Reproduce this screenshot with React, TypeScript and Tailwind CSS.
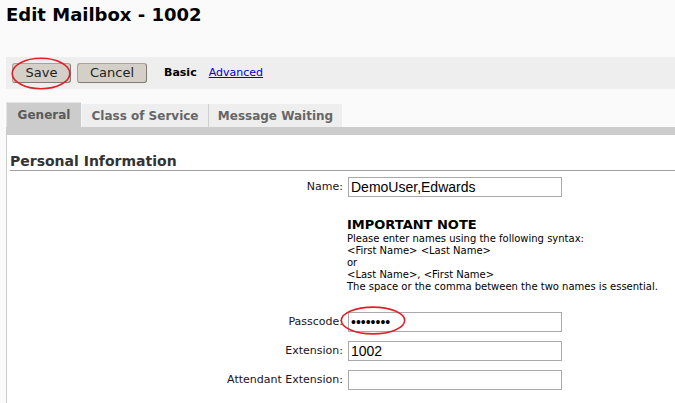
import React from "react";

const VERDANA = "font-['DejaVu_Sans','Verdana',sans-serif]";
const ARIAL = "font-['Liberation_Sans','Arial',sans-serif]";

function Field({ label, value, type = "text" }: { label: string; value: string; type?: string }) {
  return (
    <div className="flex items-center">
      <label className="w-[340px] pr-[4px] text-right text-[11px] text-[#221122]">{label}</label>
      <input
        type={type}
        defaultValue={value}
        readOnly
        className={`ml-[1px] h-[20px] w-[214px] border border-[#a9a9a9] bg-white px-[2px] text-[14px] text-black outline-none ${ARIAL}`}
      />
    </div>
  );
}

function Ellipse({ className }: { className: string }) {
  return (
    <svg className={`pointer-events-none absolute ${className}`} viewBox="0 0 100 100" preserveAspectRatio="none">
      <ellipse cx="50" cy="50" rx="48" ry="46" fill="none" stroke="#e0202a" strokeWidth="1.6" vectorEffect="non-scaling-stroke" />
    </svg>
  );
}

export default function App() {
  return (
    <div className={`relative flex h-[403px] w-[675px] flex-col overflow-hidden bg-[#fafafa] ${VERDANA}`}>
      <h1 className="h-[57px] pl-[6px] pt-[3px] text-[18px] font-bold leading-[24px] text-black">Edit Mailbox - 1002</h1>

      {/* toolbar */}
      <div className="ml-[6px] flex h-[32px] items-center bg-[#eeeeee] pl-[6px]">
        <button className="h-[20px] w-[59px] rounded-[3px] border border-[#a8a49c] border-b-[#7f7b74] border-r-[#7f7b74] bg-[#d4d0c8] text-[13px] leading-[18px] text-[#222]">
          Save
        </button>
        <button className="ml-[6px] h-[20px] w-[70px] rounded-[3px] border border-[#a8a49c] border-b-[#7f7b74] border-r-[#7f7b74] bg-[#d4d0c8] text-[13px] leading-[18px] text-[#222]">
          Cancel
        </button>
        <span className="ml-[17px] text-[11px] font-bold text-black">Basic</span>
        <a className="ml-[12px] text-[11px] text-[#0000cc] underline">Advanced</a>
      </div>

      {/* tabs */}
      <div className="ml-[6px] mt-[13px] flex h-[25px] items-end">
        <div className="flex h-[25px] w-[75px] items-center justify-center border-l border-t border-[#e4e4e4] bg-[#cccccc] text-[12px] font-bold text-[#5a5a5a]">
          General
        </div>
        <div className="flex h-[23px] w-[127px] items-center justify-center border-l border-[#f6f6f6] bg-[#eeeeee] text-[12px] font-bold text-[#666]">
          Class of Service
        </div>
        <div className="flex h-[23px] w-[134px] items-center justify-center border-l border-[#cfcfcf] bg-[#eeeeee] text-[12px] font-bold text-[#666]">
          Message Waiting
        </div>
      </div>
      <div className="ml-[6px] h-[8px] bg-[#cccccc]" />

      {/* content */}
      <div className="ml-[6px] flex-1 border-l border-[#cccccc] bg-white pl-[3px]">
        <div className="mt-[16px] h-[20px] border-b border-[#a0a0a0] text-[14px] font-bold leading-[20px] text-[#333]">
          Personal Information
        </div>
        <div className="-ml-[3px] mt-[6px] flex flex-col">
          <Field label="Name:" value="DemoUser,Edwards" />
          <div className="ml-[340px] mt-[20px] text-black">
            <div className="text-[13px] font-bold leading-[16px]">IMPORTANT NOTE</div>
            <div className="text-[10px] leading-[12px]">
              <div>Please enter names using the following syntax:</div>
              <div>&lt;First Name&gt; &lt;Last Name&gt;</div>
              <div>or</div>
              <div>&lt;Last Name&gt;, &lt;First Name&gt;</div>
              <div>The space or the comma between the two names is essential.</div>
            </div>
          </div>
          <div className="mt-[19px] flex flex-col gap-[9px]">
            <Field label="Passcode:" value="passcode" type="password" />
            <Field label="Extension:" value="1002" />
            <Field label="Attendant Extension:" value="" />
          </div>
        </div>
      </div>

      <Ellipse className="left-[11px] top-[57px] h-[33px] w-[60px]" />
      <Ellipse className="left-[340px] top-[306px] h-[29px] w-[66px]" />
    </div>
  );
}
